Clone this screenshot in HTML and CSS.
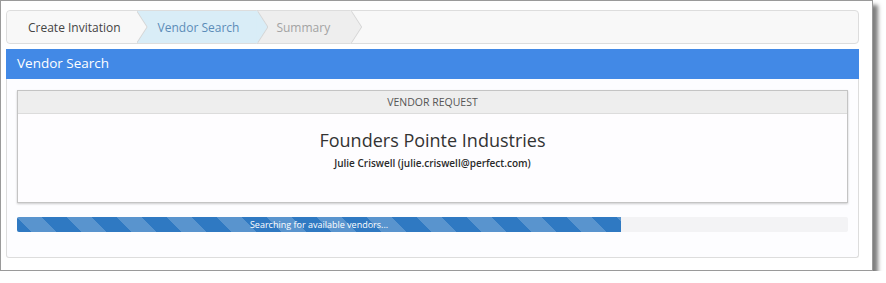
FILE: index.html
```html
<!DOCTYPE html>
<html lang="en">
<head>
	<meta charset="UTF-8">
	<title>Vendor Search</title>
	<link rel="stylesheet" href="styles.css">
</head>
<body>
	<div class="shot">
		<div class="steps">
			<div class="step step-done">Create Invitation</div>
			<div class="step step-active">Vendor Search</div>
			<div class="step step-todo">Summary</div>
		</div>
		<div class="panel-heading">Vendor Search</div>
		<div class="panel-body">
			<div class="card">
				<div class="card-header">VENDOR REQUEST</div>
				<div class="card-body">
					<h2 class="vendor-name">Founders Pointe Industries</h2>
					<p class="vendor-contact">Julie Criswell (julie.criswell@perfect.com)</p>
				</div>
			</div>
			<div class="progress">
				<div class="progress-bar" style="width: 72.7%">Searching for available vendors...</div>
			</div>
		</div>
	</div>
</body>
</html>
```

FILE: styles.css
```css
* {
	margin: 0;
	box-sizing: border-box;
}

body {
	background-color: #ffffff;
	font-family: "Open Sans", "Liberation Sans", sans-serif;
}

.shot {
	width: 873px;
	height: 271px;
	padding: 9px 13px 0 5px;
	border: 1px solid #9a9a9a;
	background-color: #ffffff;
	box-shadow: 5px 5px 4px rgba(0, 0, 0, 0.5);
}

.steps {
	display: flex;
	height: 34px;
	margin-bottom: 5px;
	border: 1px solid #dddddd;
	border-radius: 4px;
	background-color: #f8f8f8;
}

.step {
	position: relative;
	display: flex;
	align-items: center;
	font-size: 12px;
}

.step::before,
.step::after {
	content: "";
	position: absolute;
	top: -1px;
	bottom: -1px;
	width: 11px;
	clip-path: polygon(0 0, 100% 50%, 0 100%);
}

.step::before {
	left: 100%;
	background-color: #d4d4d4;
}

.step::after {
	left: calc(100% - 1px);
	background-color: inherit;
}

.step-done {
	z-index: 3;
	padding: 0 16px 0 21px;
	color: #444444;
	background-color: #f8f8f8;
	border-radius: 4px 0 0 4px;
}

.step-active {
	z-index: 2;
	padding: 0 18px 0 21px;
	color: #5b8cb8;
	background-color: #d9edf7;
}

.step-todo {
	z-index: 1;
	padding: 0 21px 0 19px;
	color: #a3a3a3;
	background-color: #eeeeee;
}

.panel-heading {
	height: 30px;
	padding-left: 11px;
	line-height: 29px;
	font-size: 13.5px;
	color: #ffffff;
	background-color: #4289e6;
}

.panel-body {
	padding: 11px 10px 25px;
	border: 1px solid #dddddd;
	border-top: 0;
	border-radius: 0 0 3px 3px;
	background-color: #fdfdff;
}

.card {
	height: 113px;
	border: 1px solid #c4c4c4;
	box-shadow: 0 1px 2px rgba(0, 0, 0, 0.2);
	background-color: #fefdff;
}

.card-header {
	height: 23px;
	line-height: 22px;
	text-align: center;
	font-size: 10.5px;
	color: #555555;
	background-color: #eeeeee;
	border-bottom: 1px solid #dcdcdc;
}

.card-body {
	padding-top: 14px;
	text-align: center;
	color: #333333;
}

.vendor-name {
	font-size: 18px;
	font-weight: 400;
	line-height: 25px;
}

.vendor-contact {
	margin-top: 2px;
	font-size: 10px;
	font-weight: 600;
	line-height: 16px;
	color: #2a2a2a;
}

.progress {
	height: 15px;
	margin-top: 14px;
	border-radius: 2px;
	background-color: #f3f3f5;
	overflow: hidden;
}

.progress-bar {
	height: 100%;
	line-height: 15px;
	text-align: center;
	font-size: 9px;
	color: #ffffff;
	background-color: #2f79c2;
	background-image: linear-gradient(45deg, rgba(255, 255, 255, 0.2) 25%, transparent 25%, transparent 50%, rgba(255, 255, 255, 0.2) 50%, rgba(255, 255, 255, 0.2) 75%, transparent 75%, transparent);
	background-size: 50px 50px;
}
```
